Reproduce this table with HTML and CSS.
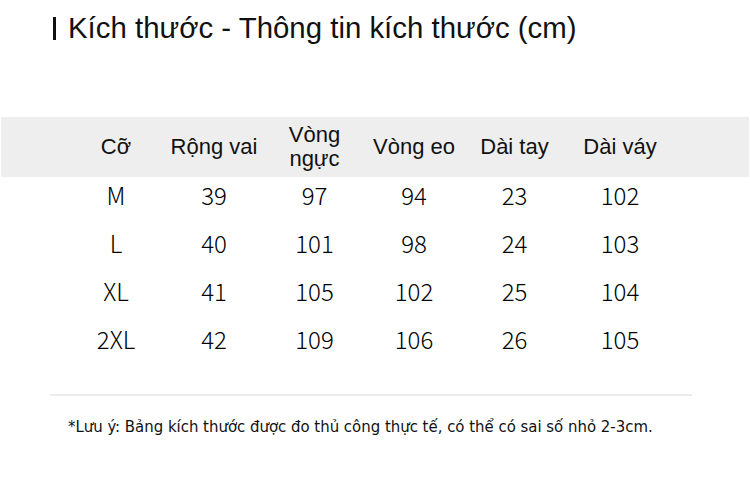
FILE: index.html
```html
<!DOCTYPE html>
<html lang="vi">
<head>
<meta charset="utf-8">
<title>Kích thước</title>
<link rel="stylesheet" href="styles.css">
</head>
<body>
<div class="page">
  <h1 class="title"><span class="bar"></span><span>Kích thước - Thông tin kích thước (cm)</span></h1>
  <div class="table">
    <div class="row head">
      <div class="cell">Cỡ</div>
      <div class="cell">Rộng vai</div>
      <div class="cell two">Vòng<br>ngực</div>
      <div class="cell">Vòng eo</div>
      <div class="cell">Dài tay</div>
      <div class="cell">Dài váy</div>
    </div>
    <div class="row data">
      <div class="cell">M</div><div class="cell">39</div><div class="cell">97</div><div class="cell">94</div><div class="cell">23</div><div class="cell">102</div>
    </div>
    <div class="row data">
      <div class="cell">L</div><div class="cell">40</div><div class="cell">101</div><div class="cell">98</div><div class="cell">24</div><div class="cell">103</div>
    </div>
    <div class="row data">
      <div class="cell">XL</div><div class="cell">41</div><div class="cell">105</div><div class="cell">102</div><div class="cell">25</div><div class="cell">104</div>
    </div>
    <div class="row data">
      <div class="cell">2XL</div><div class="cell">42</div><div class="cell">109</div><div class="cell">106</div><div class="cell">26</div><div class="cell">105</div>
    </div>
  </div>
  <hr class="rule">
  <p class="note">*Lưu ý: Bảng kích thước được đo thủ công thực tế, có thể có sai số nhỏ 2-3cm.</p>
</div>
</body>
</html>
```
FILE: styles.css
```css
html, body {
  margin: 0;
  padding: 0;
  background: #ffffff;
}
.page {
  width: 750px;
  height: 487px;
  overflow: hidden;
  color: #111111;
}
.title {
  margin: 0;
  padding: 14px 0 0 53px;
  display: flex;
  align-items: center;
  gap: 12px;
  font-family: "Liberation Sans", Arial, sans-serif;
  font-weight: 400;
  font-size: 29.4px;
  line-height: 28px;
  color: #111111;
}
.bar {
  display: block;
  width: 3px;
  height: 23px;
  background: #111111;
}
.table {
  margin-top: 75px;
  margin-left: 1px;
  width: 748px;
}
.row {
  display: grid;
  grid-template-columns: 67px 96px 100px 101px 98px 103px 108px;
}
.row .cell:first-child {
  grid-column: 2;
}
.cell {
  text-align: center;
}
.head {
  background: #eeeeee;
  height: 60px;
  align-items: center;
  font-family: "Liberation Sans", Arial, sans-serif;
  font-size: 22px;
  line-height: 22px;
}
.head .two {
  line-height: 24px;
  margin-top: -1px;
}
.data {
  height: 48px;
  align-items: center;
  font-family: "Noto Sans CJK SC", "Noto Sans", sans-serif;
  font-weight: 300;
  font-size: 24px;
  line-height: 30px;
  color: #000000;
}
.head + .data {
  margin-top: -6px;
}
.data:last-child {
  margin-bottom: 4px;
}
.rule {
  margin: 31px 0 0 50px;
  width: 642px;
  height: 2px;
  border: 0;
  background: #ececec;
}
.note {
  margin: 21px 0 0 68px;
  font-family: "DejaVu Sans Condensed", "DejaVu Sans", sans-serif;
  font-stretch: condensed;
  font-size: 16.6px;
  line-height: 20px;
  color: #111111;
}
```
